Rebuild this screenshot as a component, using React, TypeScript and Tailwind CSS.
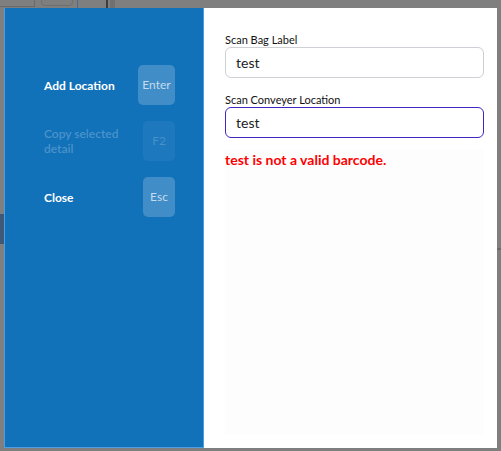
import React from 'react';

const font = { fontFamily: 'Lato, "Source Sans Pro", "Liberation Sans", sans-serif' };

interface ShortcutProps {
  label: string;
  keyName: string;
  disabled?: boolean;
  wide?: boolean;
}

const Shortcut: React.FC<ShortcutProps> = ({ label, keyName, disabled, wide }) => (
  <div className="flex items-center justify-between h-[40px]">
    <span
      className={
        disabled
          ? 'text-[12px] leading-[15px] font-semibold text-white/25 w-[80px]'
          : 'text-[12px] leading-[15px] font-bold text-white'
      }
    >
      {label}
    </span>
    <div
      className={
        (wide ? 'w-[37px] ' : 'w-[32px] ') +
        (disabled
          ? 'h-[40px] rounded-[5px] bg-white/5 text-white/20 flex items-center justify-center text-[12px]'
          : 'h-[40px] rounded-[5px] bg-white/20 text-white/70 flex items-center justify-center text-[12px]')
      }
    >
      {keyName}
    </div>
  </div>
);

export default function App() {
  return (
    <div className="relative w-[501px] h-[451px] bg-[#7f7f7f] overflow-hidden" style={font}>
      {/* faint page underneath the backdrop */}
      <div className="absolute left-0 top-0 w-[35px] h-[7px] border-r border-b border-[#6a6a6a]" />
      <div className="absolute left-[41px] top-[-4px] w-[32px] h-[10px] rounded-[4px] border border-[#6f6f6f]" />
      <div className="absolute left-[77px] top-0 w-px h-[8px] bg-[#4e6a8c]" />
      <div className="absolute left-[106px] top-0 w-[2px] h-[8px] bg-[#3d3d3d]" />
      <div className="absolute left-[110px] top-0 w-[5px] h-[8px] bg-[#707070]" />
      <div className="absolute left-0 top-[214px] w-[4px] h-[30px] bg-[#3e5878]" />
      <div className="absolute right-0 top-[248px] w-[4px] h-[2px] bg-[#6a6a6a]" />

      <div className="flex pl-[4px] pt-[8px]">
        <div className="w-[200px] h-[440px] bg-[#1171b9] border-l border-r border-b border-[#4f9de3] pl-[39px] pr-[28px] pt-[57px] flex flex-col gap-[16px]">
          <Shortcut label="Add Location" keyName="Enter" wide />
          <Shortcut label="Copy selected detail" keyName="F2" disabled />
          <Shortcut label="Close" keyName="Esc" />
        </div>

        <div className="w-[293px] h-[440px] bg-white pl-[21px] pr-[13px] pt-[25px] pb-[14px] flex flex-col">
          <label className="text-[11px] leading-[14px] text-[#111] h-[14px]">Scan Bag Label</label>
          <div className="h-[31px] rounded-[6px] border border-[#cfcfd6] flex items-center px-[10px] text-[14px] text-[#222]">
            test
          </div>
          <label className="text-[11px] leading-[14px] text-[#111] mt-[15px] h-[14px]">Scan Conveyer Location</label>
          <div className="h-[31px] rounded-[6px] border border-[#4125c4] flex items-center px-[10px] text-[14px] text-[#222]">
            test
          </div>
          <div className="flex-1 mt-[12px] bg-[#fdfdfd]">
            <p className="text-[14px] leading-[16px] font-bold text-[#ff0000] pt-[2px]">
              test is not a valid barcode.
            </p>
          </div>
        </div>
      </div>
    </div>
  );
}
